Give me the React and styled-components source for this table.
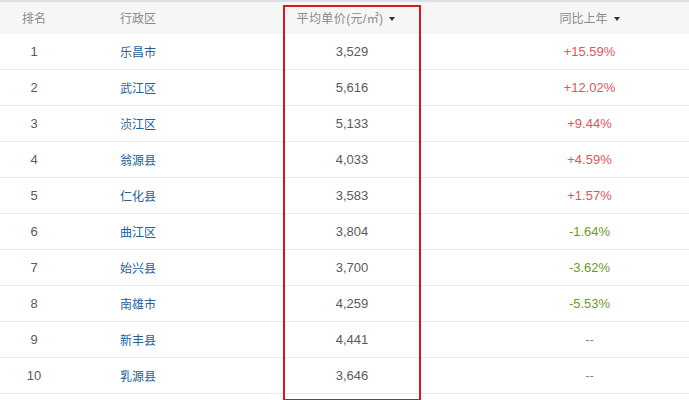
import styled, { createGlobalStyle } from "styled-components";

const GlobalStyle = createGlobalStyle`
  body {
    margin: 0;
    background: #fff;
    font-family: "Liberation Sans", "Noto Sans CJK SC", sans-serif;
  }
`;

const rows = [
  { rank: 1, name: "乐昌市", price: "3,529", change: "+15.59%" },
  { rank: 2, name: "武江区", price: "5,616", change: "+12.02%" },
  { rank: 3, name: "浈江区", price: "5,133", change: "+9.44%" },
  { rank: 4, name: "翁源县", price: "4,033", change: "+4.59%" },
  { rank: 5, name: "仁化县", price: "3,583", change: "+1.57%" },
  { rank: 6, name: "曲江区", price: "3,804", change: "-1.64%" },
  { rank: 7, name: "始兴县", price: "3,700", change: "-3.62%" },
  { rank: 8, name: "南雄市", price: "4,259", change: "-5.53%" },
  { rank: 9, name: "新丰县", price: "4,441", change: "--" },
  { rank: 10, name: "乳源县", price: "3,646", change: "--" },
];

const Page = styled.div`
  position: relative;
  width: 689px;
  height: 400px;
  overflow: hidden;
  border-top: 2px solid #dddee6;
  box-sizing: border-box;
`;

const Row = styled.div`
  display: grid;
  grid-template-columns: 68px 216px 136px 1fr;
  align-items: center;
  height: ${(p) => (p.$head ? "32px" : "36px")};
  background: ${(p) => (p.$head ? "#f6f6f6" : "#fff")};
  border-bottom: 1px solid ${(p) => (p.$head ? "#f6f6f6" : "#ececec")};
  box-sizing: border-box;
  font-size: 13px;
  color: #5a5a5a;
`;

const Cell = styled.div`
  text-align: ${(p) => p.$align || "center"};
  padding-left: ${(p) => p.$pad || 0}px;
  padding-right: ${(p) => p.$padRight || 0}px;
  white-space: nowrap;
`;

const HeadText = styled.span`
  font-size: 12px;
  color: #8a8a8a;
  letter-spacing: ${(p) => p.$spacing || 0}px;
`;

const SortArrow = styled.span`
  display: inline-block;
  margin-left: 6px;
  vertical-align: 2px;
  border-left: 3.5px solid transparent;
  border-right: 3.5px solid transparent;
  border-top: 4px solid #333;
`;

const NameLink = styled.a`
  font-size: 12px;
  color: #22619c;
  text-decoration: none;
`;

const Change = styled.span`
  color: ${(p) =>
    p.$value.startsWith("+") ? "#e3545a" : p.$value.startsWith("-") && p.$value !== "--" ? "#6f9a1d" : "#888"};
`;

const Highlight = styled.div`
  position: absolute;
  left: 283px;
  top: 3px;
  width: 138px;
  height: 396px;
  border: 2px solid #d7191f;
  box-sizing: border-box;
  pointer-events: none;
`;

export default function App() {
  return (
    <>
      <GlobalStyle />
      <Page>
        <Row $head>
          <Cell>
            <HeadText>排名</HeadText>
          </Cell>
          <Cell $align="left" $pad={52}>
            <HeadText>行政区</HeadText>
          </Cell>
          <Cell $padRight={12}>
            <HeadText $spacing={0.4}>平均单价(元/㎡)</HeadText>
            <SortArrow />
          </Cell>
          <Cell $pad={70}>
            <HeadText>同比上年</HeadText>
            <SortArrow />
          </Cell>
        </Row>
        {rows.map((r) => (
          <Row key={r.rank}>
            <Cell>{r.rank}</Cell>
            <Cell $align="left" $pad={52}>
              <NameLink href="#">{r.name}</NameLink>
            </Cell>
            <Cell>{r.price}</Cell>
            <Cell $pad={70}>
              <Change $value={r.change}>{r.change}</Change>
            </Cell>
          </Row>
        ))}
        <Highlight />
      </Page>
    </>
  );
}
